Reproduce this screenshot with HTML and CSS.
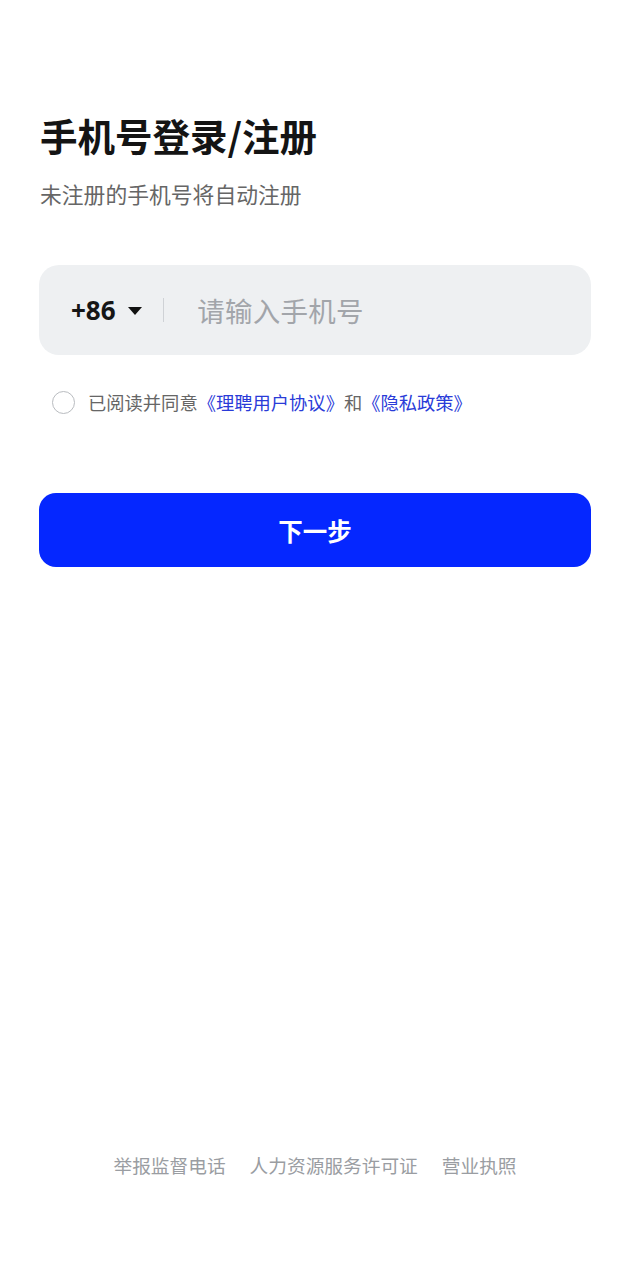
FILE: index.html
```html
<!DOCTYPE html>
<html lang="zh-CN">
<head>
<meta charset="utf-8">
<title>手机号登录/注册</title>
<link rel="stylesheet" href="styles.css">
</head>
<body>
<div class="page">
  <main class="content">
    <h1 class="title">手机号登录/注册</h1>
    <p class="subtitle">未注册的手机号将自动注册</p>
    <div class="phone-box">
      <div class="code">
        <span class="code-text">+86</span>
        <svg class="caret" width="14" height="8" viewBox="0 0 14 8"><path d="M0 0H14L7 8Z" fill="#111"/></svg>
      </div>
      <span class="sep"></span>
      <span class="placeholder">请输入手机号</span>
    </div>
    <div class="agree">
      <span class="radio"></span>
      <span class="agree-text">已阅读并同意<span class="link">《理聘用户协议》</span>和<span class="link">《隐私政策》</span></span>
    </div>
    <button class="next">下一步</button>
  </main>
  <footer class="footer">
    <span>举报监督电话</span>
    <span>人力资源服务许可证</span>
    <span>营业执照</span>
  </footer>
</div>
</body>
</html>
```

FILE: styles.css
```css
* { box-sizing: border-box; }
html, body { margin: 0; padding: 0; background: #fff; }
body {
  font-family: "Noto Sans CJK SC", "Noto Sans", sans-serif;
  color: #1a1a1a;
}
.page {
  width: 630px;
  height: 1280px;
  display: flex;
  flex-direction: column;
}
.content {
  flex: 1;
  padding: 109px 39px 0 39px;
  display: flex;
  flex-direction: column;
}
.title {
  margin: 0;
  padding-left: 1px;
  font-size: 37.5px;
  line-height: 52px;
  font-weight: 700;
  color: #141414;
}
.subtitle {
  margin: 17px 0 0 1px;
  font-size: 21.8px;
  line-height: 32px;
  color: #666;
}
.phone-box {
  margin-top: 55px;
  height: 90px;
  background: #eef0f2;
  border-radius: 20px;
  display: flex;
  align-items: center;
  padding-left: 32px;
}
.code {
  display: flex;
  align-items: center;
  gap: 12px;
}
.code-text {
  font-size: 26px;
  font-weight: 700;
  color: #161616;
  font-family: "Noto Sans", "Noto Sans CJK SC", sans-serif;
}
.caret { margin-top: 1px; }
.sep {
  width: 1.5px;
  height: 24px;
  background: #cfd2d6;
  margin-left: 21px;
  margin-right: 33px;
}
.placeholder {
  font-size: 27.5px;
  color: #a2a5aa;
  letter-spacing: 0.3px;
}
.agree {
  margin-top: 34px;
  display: flex;
  align-items: center;
  padding-left: 13px;
}
.radio {
  width: 23px;
  height: 23px;
  border: 1.5px solid #b9bcc0;
  border-radius: 50%;
  margin-right: 13px;
}
.agree-text {
  font-size: 18.3px;
  line-height: 26px;
  color: #666;
}
.link { color: #2a3bd8; }
.next {
  margin-top: 78px;
  height: 74px;
  border: none;
  border-radius: 17px;
  background: #0527ff;
  color: #fff;
  font-family: "Noto Sans CJK SC", sans-serif;
  font-size: 24.5px;
  font-weight: 700;
  padding: 0;
}
.footer {
  display: flex;
  justify-content: center;
  gap: 24px;
  padding-bottom: 101px;
  font-size: 18.7px;
  line-height: 28px;
  color: #9a9da2;
  padding-left: 0;
}
```
